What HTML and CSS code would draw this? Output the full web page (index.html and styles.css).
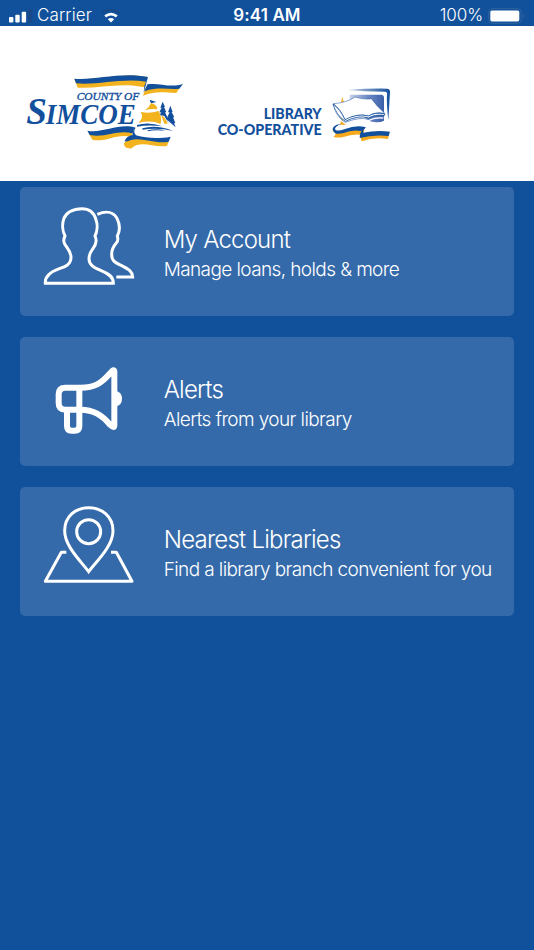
FILE: index.html
```html
<!DOCTYPE html>
<html lang="en">
<head>
    <meta charset="UTF-8">
    <meta name="viewport" content="width=device-width, initial-scale=1.0">
    <title>Simcoe County Library Co-operative</title>
    <link rel="stylesheet" href="styles.css">
</head>
<body>
    <div class="status-bar">
        <div class="status-left">
            <svg class="signal" viewBox="0 0 24 14" width="24" height="14">
                <rect x="0" y="8" width="4.4" height="5.5" rx="1" fill="#fff"/>
                <rect x="6.3" y="5.7" width="4.4" height="7.8" rx="1" fill="#fff"/>
                <rect x="12.7" y="2.8" width="4.4" height="10.7" rx="1" fill="#fff"/>
                <rect x="19" y="0" width="4.4" height="13.5" rx="1" fill="#17498b"/>
            </svg>
            <span class="carrier">Carrier</span>
            <svg class="wifi" viewBox="0 0 20 14" width="20" height="14">
                <path d="M1.4 4.5Q10-3 18.6 4.5" fill="none" stroke="#17498b" stroke-width="2.3"/>
                <path d="M4.2 7.4Q10 2.7 15.8 7.4" fill="none" stroke="#fff" stroke-width="2.7"/>
                <path d="M6.8 10.2Q10 7.8 13.2 10.2L10 13.4Z" fill="#fff"/>
            </svg>
        </div>
        <span class="time">9:41 AM</span>
        <div class="status-right">
            <span class="percent">100%</span>
            <svg class="battery" viewBox="0 0 37 16" width="37" height="16">
                <rect x=".7" y=".7" width="32.5" height="14.6" rx="3.5" fill="none" stroke="#30639f" stroke-width="1"/>
                <rect x="2.3" y="2.4" width="29" height="11" rx="1.6" fill="#fff"/>
                <path d="M35 5.4Q37.6 8 35 10.6Z" fill="#30639f"/>
            </svg>
        </div>
    </div>

    <header>
        <svg class="county-logo" viewBox="0 0 540 285" width="180" height="95">
            <!-- top ribbon -->
            <path d="M178 42C240 48 315 22 397 36L389 67C315 50 250 72 188 68Z" fill="#f2b31e"/>
            <path d="M178 41C240 47 315 20 399 36L394 50C320 38 245 62 183 55Z" fill="#124f9c"/>
            <path d="M384 92L392 68C430 62 460 74 494 68L484 84C450 84 425 76 384 92Z" fill="#f2b31e"/>
            <path d="M388 79L397 58C432 52 464 70 504 57L493 71C458 74 430 65 388 79Z" fill="#124f9c"/>
            <path d="M399 36L386 84L388 63Z" fill="#124f9c"/>
            <!-- name -->
            <text class="county-small" x="185" y="105" textLength="188" lengthAdjust="spacingAndGlyphs">COUNTY OF</text>
            <text class="county-initial" x="34" y="178" textLength="62" lengthAdjust="spacingAndGlyphs">S</text>
            <text class="county-big" x="92" y="177" textLength="270" lengthAdjust="spacingAndGlyphs">IMCOE</text>
            <!-- ship -->
            <path d="M404 104L424 111L408 115Z" fill="#124f9c"/>
            <path d="M408 114Q426 118 427 133Q408 130 390 136Q404 126 408 114Z" fill="#f2b31e"/>
            <path d="M377 141Q405 147 430 138Q442 155 437 177Q407 164 370 174Q388 158 377 141Z" fill="#f2b31e"/>
            <path d="M438 150L448 176H458Q452 158 438 150Z" fill="#f2b31e"/>
            <!-- trees -->
            <path d="M443 110L450 126L447 126L454 142L450 142L461 164L456 164L464 180L448 153L435 150L438 142L433 142L440 128L436 128Z" fill="#124f9c"/>
            <path d="M466 122L473 141L470 141L478 157L474 157L481 174L477 174L482 187L456 164L460 158L456 158L464 142L459 142Z" fill="#124f9c"/>
            <!-- water -->
            <path d="M366 180Q401 169 442 184Q402 178 366 185Z" fill="#124f9c"/>
            <path d="M382 190Q425 178 474 198Q430 187 382 194Z" fill="#124f9c"/>
            <path d="M398 196Q425 189 450 197Q420 193 398 199Z" fill="#124f9c"/>
            <!-- bottom ribbon -->
            <path d="M222 207C268 220 310 184 354 198L350 216C306 203 273 233 232 224Z" fill="#f2b31e"/>
            <path d="M217 197C264 206 311 173 362 188Q353 195 352 205C307 193 271 220 224 210Z" fill="#124f9c"/>
            <path d="M327 235C343 216 372 220 399 225C425 230 441 229 462 226L456 243C414 249 377 224 350 250Q325 252 327 235Z" fill="#f2b31e"/>
            <path d="M362 188Q353 200 363 211C394 219 426 223 467 215L461 230C420 238 379 215 348 225Q332 231 329 229Q334 212 353 210Q350 198 362 188Z" fill="#124f9c"/>
        </svg>
        <svg class="coop-logo" viewBox="0 0 570 210" width="190" height="70">
            <defs>
                <linearGradient id="screen" x1="0" y1="0" x2="1" y2="0">
                    <stop offset="0" stop-color="#c9d4ea"/>
                    <stop offset=".5" stop-color="#6f8cc6"/>
                    <stop offset="1" stop-color="#3b60aa"/>
                </linearGradient>
                <linearGradient id="rim" x1="0" y1="0" x2="1" y2="0">
                    <stop offset="0" stop-color="#c6d1e7"/>
                    <stop offset="1" stop-color="#124f9c"/>
                </linearGradient>
            </defs>
            <text class="coop-text" x="335" y="116" text-anchor="end" textLength="174" lengthAdjust="spacingAndGlyphs">LIBRARY</text>
            <text class="coop-text" x="335" y="164" text-anchor="end" textLength="312" lengthAdjust="spacingAndGlyphs">CO-OPERATIVE</text>
            <!-- screen -->
            <path d="M412 30Q475 25 531 26Q541 27 540 37L535 120Q529 72 531 40Q531 35 525 35Q465 35 412 30Z" fill="url(#rim)"/>
            <path d="M419 44H514Q522 45 522 53V122Q506 130 480 124L419 82Z" fill="url(#screen)"/>
            <path d="M397 50L402 65L397 78L393 65Z" fill="#f5bd49"/>
            <path d="M397 108Q396 130 410 134H390Z" fill="#f5a81c"/>
            <!-- book -->
            <path d="M370 71Q411 68 435 51Q467 60 484 56Q500 78 524 100Q493 95 477 108Q442 98 405 121Q393 88 370 71Z" fill="#fff" stroke="#124f9c" stroke-width="1.5"/>
            <path d="M369 72Q378 105 406 124Q446 104 476 114Q493 103 524 106V101Q493 96 476 108Q441 99 405 119Q391 88 369 72Z" fill="#fff" stroke="#124f9c" stroke-width="2.5"/>
            <path d="M374 91Q384 118 407 131Q449 113 475 122Q493 111 520 114" fill="none" stroke="#fff" stroke-width="4"/>
            <path d="M374 88Q384 114 406 127Q449 110 475 118Q493 108 522 110" fill="none" stroke="#4167ad" stroke-width="2"/>
            <!-- ribbon -->
            <path d="M386 135Q367 142 371 151Q376 160 397 158Q436 142 463 149L459 165Q431 160 400 171Q383 175 370 170Q384 163 369 153Q363 145 386 135Z" fill="#f5a81c"/>
            <path d="M393 132Q371 142 376 149Q382 155 405 147Q440 134 467 142Q463 150 453 153Q428 148 398 160Q374 165 370 153Q363 143 380 134Z" fill="#124f9c"/>
            <path d="M450 167Q487 162 537 164L534 177Q491 170 455 184Z" fill="#f5a81c"/>
            <path d="M469 142Q457 149 460 158Q499 150 540 155L536 168Q490 163 449 174Q450 145 469 142Z" fill="#124f9c"/>
        </svg>
    </header>

    <main>
        <a class="card">
            <svg class="icon" viewBox="0 0 420 390" width="140" height="130">
                <g fill="none" stroke="#fff" stroke-width="9">
                    <path d="M91 289H295C296 269 279 259 257 250C235 241 222 233 222 215C222 188 242 185 243 164Q244 156 240 147C247 133 248 112 243 98C237 76 222 65 201 65C172 65 153 78 147 94C141 110 142 132 150 147Q145 157 147 165C149 179 168 187 168 211C168 233 151 239 133 245C108 254 89 267 91 289Z"/>
                    <path d="M247 82C277 69 297 77 306 94C315 112 315 132 307 147Q311 161 304 168C295 178 290 187 290 202C290 221 298 226 320 236C342 247 352 254 353 270H304"/>
                </g>
            </svg>
            <div class="card-text">
                <h2>My Account</h2>
                <p>Manage loans, holds &amp; more</p>
            </div>
        </a>
        <a class="card">
            <svg class="icon" viewBox="0 0 420 390" width="140" height="130">
                <g fill="none" stroke="#fff" stroke-width="18" stroke-linejoin="round">
                    <path d="M193 152H151Q131 152 131 172V198Q131 218 151 218H193Z"/>
                    <path d="M193 152C239 153 259 139 286 108Q298 93 298 105V264Q298 276 286 264C262 235 236 217 193 218"/>
                    <path d="M193 218V267Q193 281 179 281H170Q156 281 156 267V218"/>
                </g>
                <path d="M303 161Q321 166 321 185T303 208Z" fill="#fff"/>
            </svg>
            <div class="card-text">
                <h2>Alerts</h2>
                <p>Alerts from your library</p>
            </div>
        </a>
        <a class="card">
            <svg class="icon" viewBox="0 0 420 390" width="140" height="130">
                <g fill="none" stroke="#fff" stroke-width="9">
                    <path d="M221 254C196 221 149 177 149 131C149 89 181 62 221 62S294 89 294 131C294 177 246 221 221 254Z"/>
                    <circle cx="221" cy="134" r="36"/>
                    <path d="M154 196H139L91 283H351L304 196H288" stroke-linejoin="round"/>
                </g>
            </svg>
            <div class="card-text">
                <h2>Nearest Libraries</h2>
                <p>Find a library branch convenient for you</p>
            </div>
        </a>
    </main>
</body>
</html>
```
FILE: styles.css
```css
* {
    box-sizing: border-box;
}

body {
    font-family: Inter, "Liberation Sans", sans-serif;
    margin: 0;
    min-height: 950px;
    background: #11519b;
    color: #fff;
}

.status-bar {
    display: grid;
    grid-template-columns: 1fr auto 1fr;
    align-items: center;
    height: 26px;
    padding: 5px 9px 0;
    font-size: 17px;
    line-height: 21px;
}

.status-left, .status-right {
    display: flex;
    align-items: center;
}

.status-right {
    justify-content: flex-end;
    gap: 5px;
}

.carrier {
    margin: 0 9px 0 4px;
    font-weight: 300;
    letter-spacing: 0.1px;
}

.time {
    font-weight: 600;
    letter-spacing: 0.1px;
}

.percent {
    font-weight: 300;
    letter-spacing: -0.1px;
}

header {
    display: flex;
    align-items: flex-start;
    gap: 15px;
    height: 155px;
    padding: 39px 15px 0;
    background: #fff;
}

.coop-logo {
    margin-top: 15px;
}

.county-small, .county-initial, .county-big {
    font-family: "Liberation Serif", serif;
    font-style: italic;
    font-weight: bold;
    fill: #124f9c;
}

.county-small {
    font-size: 32px;
    font-weight: normal;
    stroke: #124f9c;
    stroke-width: 1;
}

.county-initial {
    font-size: 111px;
}

.county-big {
    font-size: 91px;
}

.coop-text {
    font-family: Lato, sans-serif;
    font-size: 43px;
    font-weight: 900;
    fill: #124f9c;
}

main {
    display: flex;
    flex-direction: column;
    gap: 20.7px;
    padding: 6.3px 19.7px;
}

.card {
    display: flex;
    height: 129px;
    overflow: hidden;
    background: #356aaa;
    border-radius: 5px;
}

.icon {
    flex: none;
    margin-left: -5px;
}

.card-text {
    padding: 37px 0 0 9px;
    white-space: nowrap;
}

.card-text h2 {
    margin: 0;
    font-size: 24px;
    font-weight: 300;
    line-height: 32px;
    letter-spacing: -0.78px;
}

.card-text p {
    margin: 0;
    font-size: 19px;
    font-weight: 300;
    line-height: 28px;
    letter-spacing: -0.6px;
}
```
